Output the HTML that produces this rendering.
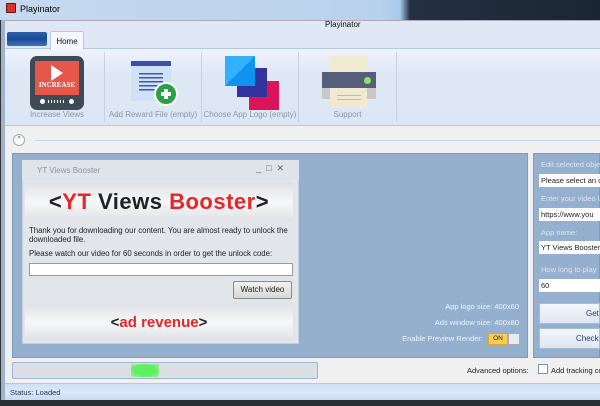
<!DOCTYPE html>
<html><head><style>
*{box-sizing:border-box;margin:0;padding:0}
body{width:600px;height:406px;overflow:hidden;font-family:"Liberation Sans",sans-serif;font-size:8px;color:#222;background:#f0f0f0;position:relative}
.a{position:absolute}
</style></head><body>
<div class="a" style="left:0;top:0;width:600px;height:20px;background:linear-gradient(90deg,#c6d9ee 0,#b9d2ec 380px,#a9c9ec 400px,#243041 410px,#1b2633 600px)"></div>
<div class="a" style="left:6px;top:3px;width:10px;height:10px;background:#d33;border:1px solid #611;border-radius:1px"></div>
<div class="a" style="left:20px;top:4px;font-size:9px;color:#000">Playinator</div>
<div class="a" style="left:0;top:20px;width:5px;height:386px;background:#9bb4cf;border-left:1px solid #333"></div>
<div class="a" style="left:5px;top:20px;width:595px;height:9px;background:#dfe8f4;border-top:1px solid #aab"></div>
<div class="a" style="left:325px;top:20px;font-size:8px;color:#111">Playinator</div>
<div class="a" style="left:5px;top:29px;width:595px;height:20px;background:#dfe8f4;border-bottom:1px solid #b8c9de"></div>
<div class="a" style="left:7px;top:32px;width:40px;height:14px;background:linear-gradient(#2d5fa8,#1c4a96 50%,#3b73c0);border-radius:2px"></div>
<div class="a" style="left:50px;top:31px;width:34px;height:19px;background:#f4f8fd;border:1px solid #b8c9de;border-bottom:none;border-radius:2px 2px 0 0;text-align:center;padding-top:5px;font-size:8px;color:#111">Home</div>
<div class="a" style="left:5px;top:50px;width:595px;height:76px;background:linear-gradient(#eef3fb,#dfe8f5 30%,#dde6f4);border-bottom:1px solid #b8c9de"></div>
<div class="a" style="left:104px;top:52px;width:1px;height:70px;background:#c4d2e4"></div>
<div class="a" style="left:201px;top:52px;width:1px;height:70px;background:#c4d2e4"></div>
<div class="a" style="left:298px;top:52px;width:1px;height:70px;background:#c4d2e4"></div>
<div class="a" style="left:396px;top:52px;width:1px;height:70px;background:#c4d2e4"></div>
<div class="a" style="left:30px;top:56px;width:54px;height:54px;background:#3e4a55;border-radius:7px"></div>
<div class="a" style="left:35px;top:61px;width:44px;height:34px;background:#e5574b"></div>
<div class="a" style="left:51px;top:65px;width:0;height:0;border-left:12px solid #fff;border-top:8px solid transparent;border-bottom:8px solid transparent"></div>
<div class="a" style="left:36px;top:81px;width:42px;text-align:center;font-family:'Liberation Serif',serif;font-weight:bold;font-size:7px;color:#fff">INCREASE</div>
<div class="a" style="left:40px;top:99px;width:5px;height:5px;border-radius:50%;background:#fff"></div>
<div class="a" style="left:69px;top:99px;width:5px;height:5px;border-radius:50%;background:#fff"></div>
<div class="a" style="left:48px;top:100px;width:18px;height:3px;background:repeating-linear-gradient(90deg,#fff 0 1px,transparent 1px 3px)"></div>
<div class="a" style="left:10px;top:110px;width:94px;text-align:center;color:#8a97a8;font-size:8px">Increase Views</div>
<div class="a" style="left:131px;top:61px;width:40px;height:40px;background:#cfe1f6;border-top:5px solid #3a4fa8"></div>
<div class="a" style="left:139px;top:73px;width:24px;height:20px;background:repeating-linear-gradient(#3a55b5 0 1.5px,transparent 1.5px 4px)"></div>
<div class="a" style="left:154px;top:82px;width:24px;height:24px;border-radius:50%;background:#2aa048;border:2px solid #fff"></div>
<div class="a" style="left:161px;top:92px;width:10px;height:4px;background:#fff"></div>
<div class="a" style="left:164px;top:89px;width:4px;height:10px;background:#fff"></div>
<div class="a" style="left:105px;top:110px;width:96px;text-align:center;color:#8a97a8">Add Reward File (empty)</div>
<div class="a" style="left:249px;top:81px;width:30px;height:29px;background:#dc1457"></div>
<div class="a" style="left:237px;top:68px;width:30px;height:29px;background:#3333a0"></div>
<div class="a" style="left:225px;top:56px;width:30px;height:30px;background:linear-gradient(135deg,#33b0fb 50%,#0f93ef 50%)"></div>
<div class="a" style="left:202px;top:110px;width:96px;text-align:center;color:#8a97a8">Choose App Logo (empty)</div>
<div class="a" style="left:330px;top:56px;width:37px;height:18px;background:#f1ead3"></div>
<div class="a" style="left:322px;top:72px;width:54px;height:16px;background:#555e7a"></div>
<div class="a" style="left:364px;top:77px;width:7px;height:7px;border-radius:50%;background:#8ee35a"></div>
<div class="a" style="left:322px;top:88px;width:54px;height:11px;background:#c8c8c8"></div>
<div class="a" style="left:330px;top:88px;width:37px;height:20px;background:#f1ead3"></div>
<div class="a" style="left:337px;top:95px;width:24px;height:1px;background:#c9b98f"></div>
<div class="a" style="left:337px;top:99px;width:24px;height:1px;background:#c9b98f"></div>
<div class="a" style="left:299px;top:110px;width:97px;text-align:center;color:#8a97a8">Support</div>
<div class="a" style="left:13px;top:134px;width:12px;height:12px;border-radius:50%;border:1px solid #9ab;background:#fff;font-size:7px;text-align:center;line-height:9px;color:#335">^</div>
<div class="a" style="left:35px;top:140px;width:565px;height:1px;background:#c8d6e8"></div>
<div class="a" style="left:12px;top:153px;width:516px;height:205px;background:#95b0cf;border:1px solid #7e9cc0"></div>
<div class="a" style="left:22px;top:160px;width:277px;height:184px;background:#e2e6eb;border:1px solid #c6cfda"></div>
<div class="a" style="left:22px;top:160px;width:277px;height:20px;background:#dfe4ea"></div>
<div class="a" style="left:37px;top:166px;color:#8894a4;font-size:8px">YT Views Booster</div>
<div class="a" style="left:256px;top:163px;color:#567;font-size:9px;letter-spacing:5px">_□✕</div>
<div class="a" style="left:25px;top:182px;width:268px;height:40px;background:linear-gradient(#dde0e4,#f6f7f8 50%,#dfe2e6)"></div>
<div class="a" style="left:25px;top:189px;width:268px;text-align:center;font-size:22px;font-weight:bold;color:#222;letter-spacing:0.5px">&lt;<span style="color:#e8262a">YT</span> Views <span style="color:#e8262a">Booster</span>&gt;</div>
<div class="a" style="left:29px;top:226px;width:268px;font-size:7.8px;line-height:9px;color:#222">Thank you for downloading our content. You are almost ready to unlock the downloaded file.</div>
<div class="a" style="left:29px;top:249px;font-size:7.8px;color:#222">Please watch our video for 60 seconds in order to get the unlock code:</div>
<div class="a" style="left:29px;top:263px;width:264px;height:13px;background:#fff;border:1px solid #999"></div>
<div class="a" style="left:233px;top:281px;width:59px;height:18px;background:linear-gradient(#f2f2f2,#d8d8d8);border:1px solid #8a8a8a;border-radius:2px;text-align:center;line-height:16px;font-size:8px">Watch video</div>
<div class="a" style="left:25px;top:303px;width:268px;height:38px;background:linear-gradient(#dde0e4,#f6f7f8 50%,#dfe2e6)"></div>
<div class="a" style="left:25px;top:314px;width:268px;text-align:center;font-size:15px;font-weight:bold;color:#222">&lt;<span style="color:#e8262a">ad revenue</span>&gt;</div>
<div class="a" style="left:380px;top:302px;width:139px;text-align:right;color:#eef3fa;font-size:7.5px">App logo size: 400x60</div>
<div class="a" style="left:380px;top:318px;width:139px;text-align:right;color:#eef3fa;font-size:7.5px">Ads window size: 400x80</div>
<div class="a" style="left:380px;top:334px;width:103px;text-align:right;color:#eef3fa;font-size:7.5px">Enable Preview Render:</div>
<div class="a" style="left:488px;top:333px;width:20px;height:12px;background:#f7cc55;border:1px solid #d9a830;font-size:6.5px;text-align:center;line-height:10px">ON</div>
<div class="a" style="left:508px;top:333px;width:12px;height:12px;background:#e8ecf0;border:1px solid #aab"></div>
<div class="a" style="left:533px;top:153px;width:67px;height:205px;background:#95b0cf;border:1px solid #7e9cc0"></div>
<div class="a" style="left:541px;top:160px;color:#dbe5f1;font-size:7.5px;white-space:nowrap">Edit selected obje</div>
<div class="a" style="left:539px;top:174px;width:61px;height:13px;background:#fff;font-size:7.5px;padding:2px 2px;white-space:nowrap;overflow:hidden">Please select an c</div>
<div class="a" style="left:541px;top:194px;color:#dbe5f1;font-size:7.5px;white-space:nowrap">Enter your video U</div>
<div class="a" style="left:539px;top:208px;width:61px;height:13px;background:#fff;font-size:7.5px;padding:2px 2px;white-space:nowrap;overflow:hidden">https://www.you</div>
<div class="a" style="left:541px;top:228px;color:#dbe5f1;font-size:7.5px">App name:</div>
<div class="a" style="left:539px;top:241px;width:61px;height:13px;background:#fff;font-size:7.5px;padding:2px 2px;white-space:nowrap;overflow:hidden">YT Views Booster</div>
<div class="a" style="left:541px;top:265px;color:#dbe5f1;font-size:7.5px;white-space:nowrap">How long to play</div>
<div class="a" style="left:539px;top:279px;width:61px;height:13px;background:#fff;font-size:7.5px;padding:2px 2px">60</div>
<div class="a" style="left:539px;top:303px;width:61px;height:21px;background:linear-gradient(#f4f7fb,#dde6f1);border:1px solid #a8bbd3;font-size:8px;padding:5px 0 0 46px;color:#1e3e6e">Get</div>
<div class="a" style="left:539px;top:328px;width:61px;height:21px;background:linear-gradient(#f4f7fb,#dde6f1);border:1px solid #a8bbd3;font-size:8px;padding:5px 0 0 36px;color:#1e3e6e;white-space:nowrap">Check</div>
<div class="a" style="left:12px;top:362px;width:306px;height:17px;background:#dcdfe3;border:1px solid #9cb5d6;border-radius:2px"></div>
<div class="a" style="left:131px;top:364px;width:28px;height:13px;background:radial-gradient(ellipse,#5ff05f 55%,#b8e0b8)"></div>
<div class="a" style="left:467px;top:366px;font-size:7.5px;color:#222">Advanced options:</div>
<div class="a" style="left:538px;top:364px;width:10px;height:10px;background:#fff;border:1px solid #7890a8"></div>
<div class="a" style="left:551px;top:366px;font-size:7.5px;white-space:nowrap">Add tracking co</div>
<div class="a" style="left:5px;top:383px;width:595px;height:17px;background:linear-gradient(#cfe0f5,#dde9f8 50%,#c7daf2);border-top:1px solid #b4c8e2"></div>
<div class="a" style="left:10px;top:388px;font-size:7.5px;color:#1e3550">Status: Loaded</div>
<div class="a" style="left:0;top:400px;width:600px;height:6px;background:#2a2e33"></div>
</body></html>
